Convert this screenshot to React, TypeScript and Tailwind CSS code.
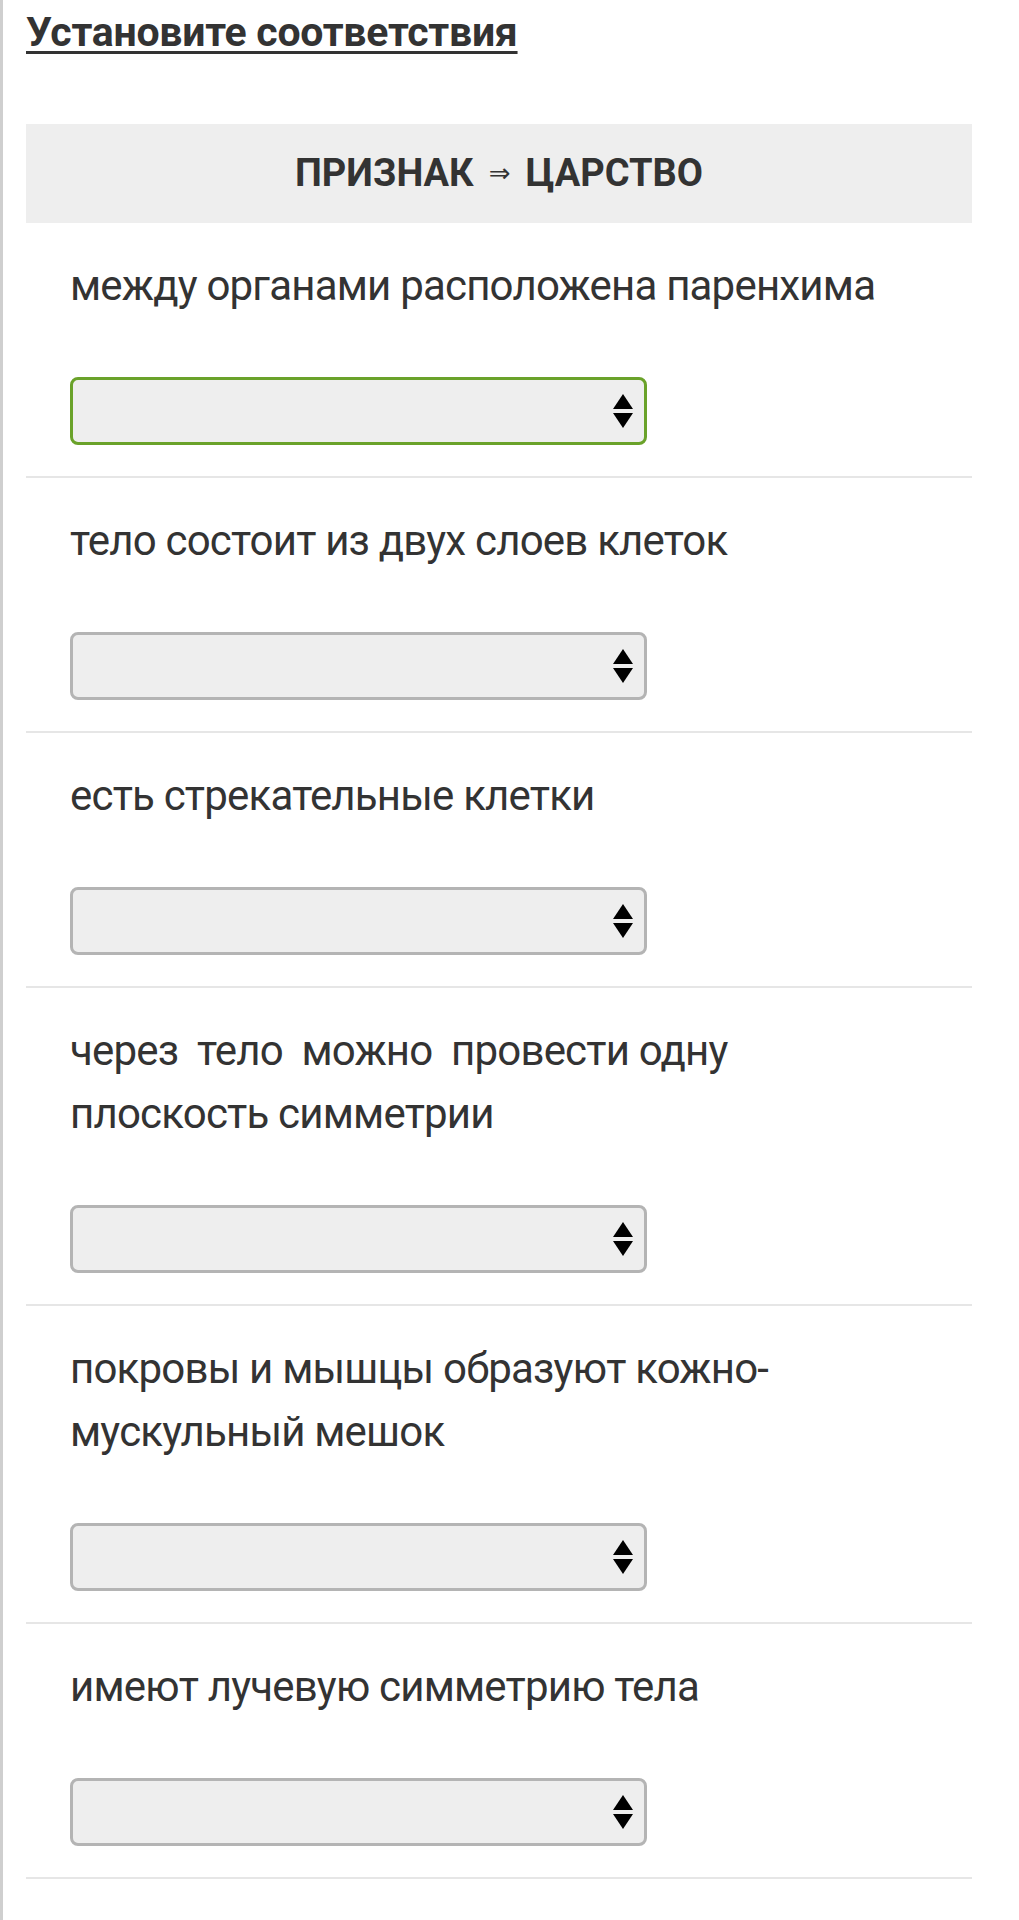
import React from "react";

type Row = { lines: React.ReactNode; active?: boolean };

const rows: Row[] = [
  { lines: "между органами расположена паренхима", active: true },
  { lines: "тело состоит из двух слоев клеток" },
  { lines: "есть стрекательные клетки" },
  {
    lines: (
      <>
        <span className="[word-spacing:9px]">через тело можно провести</span> одну
        <br />
        плоскость симметрии
      </>
    ),
  },
  {
    lines: (
      <>
        покровы и мышцы образуют кожно-
        <br />
        мускульный мешок
      </>
    ),
  },
  { lines: "имеют лучевую симметрию тела" },
];

function SortArrows() {
  return (
    <svg width="22" height="34" viewBox="0 0 22 34" className="shrink-0">
      <polygon points="1,15 11,0 21,15" fill="#000" />
      <polygon points="1,19 11,34 21,19" fill="#000" />
    </svg>
  );
}

function FakeSelect({ active }: { active?: boolean }) {
  return (
    <div
      className={
        active
          ? "flex h-[68px] w-[577px] items-center justify-end rounded-[8px] border-[3px] border-[#6aa22a] bg-[#eeeeee] pr-[10px]"
          : "flex h-[68px] w-[577px] items-center justify-end rounded-[8px] border-[3px] border-[#b4b4b4] bg-[#eeeeee] pr-[10px]"
      }
    >
      <SortArrows />
    </div>
  );
}

export default function App() {
  return (
    <div className="min-h-[1920px] w-full border-l-[3px] border-[#cfcfcf] bg-white pl-[23px] pr-[47px] font-['Roboto','Liberation_Sans',sans-serif] text-[#333333]">
      <h1 className="pt-[8px] text-[41px] font-bold leading-[1.2] tracking-[-0.25px] underline decoration-[3px] underline-offset-[5px]">
        Установите соответствия
      </h1>

      <div className="mt-[67px] flex h-[99px] items-center justify-center bg-[#eeeeee] text-[38px] font-bold">
        <span>ПРИЗНАК</span>
        <span className="mx-[15px] font-['DejaVu_Sans',sans-serif] text-[26px] font-normal">⇒</span>
        <span>ЦАРСТВО</span>
      </div>

      {rows.map((row, i) => (
        <div key={i} className="border-b-2 border-[#e6e6e6] px-[44px] pt-[31px] pb-[31px]">
          <p className="text-[42px] leading-[63px] tracking-[-0.8px]">{row.lines}</p>
          <div className="mt-[60px]">
            <FakeSelect active={row.active} />
          </div>
        </div>
      ))}
    </div>
  );
}
